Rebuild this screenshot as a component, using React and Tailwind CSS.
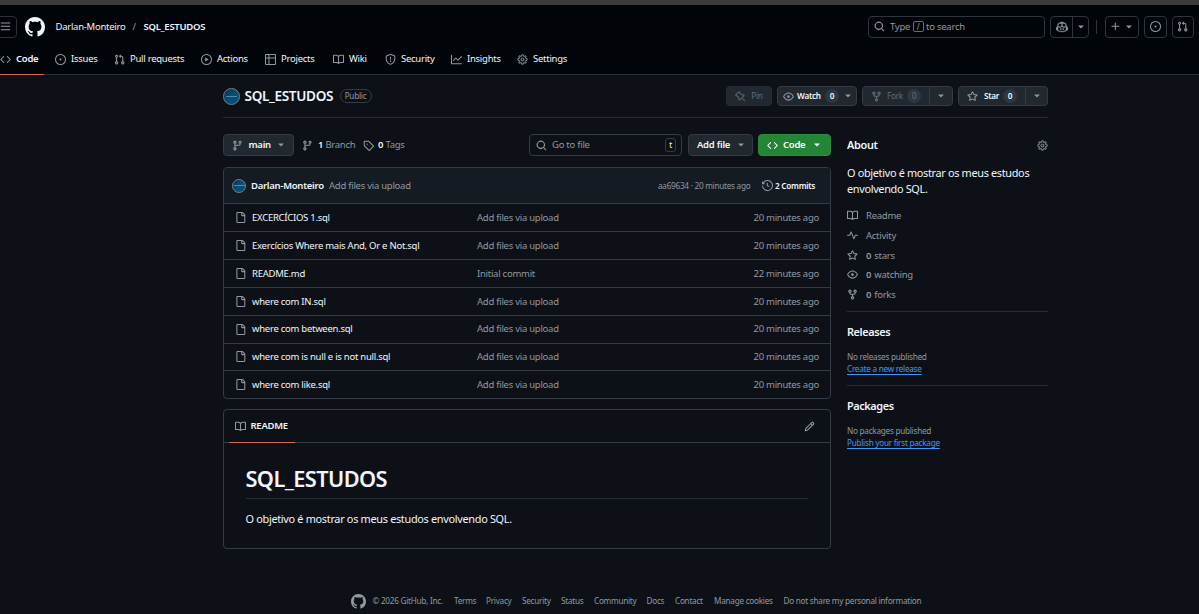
import { GoCopilot, GoGear, GoPin, GoTriangleDown } from "react-icons/go";

const paths = {
  menu: "M1 2.75A.75.75 0 0 1 1.75 2h12.5a.75.75 0 0 1 0 1.5H1.75A.75.75 0 0 1 1 2.75Zm0 5A.75.75 0 0 1 1.75 7h12.5a.75.75 0 0 1 0 1.5H1.75A.75.75 0 0 1 1 7.75ZM1.75 12h12.5a.75.75 0 0 1 0 1.5H1.75a.75.75 0 0 1 0-1.5Z",
  github: "M8 0c4.42 0 8 3.58 8 8a8.013 8.013 0 0 1-5.45 7.59c-.4.08-.55-.17-.55-.38 0-.27.01-1.13.01-2.2 0-.75-.25-1.23-.54-1.48 1.78-.2 3.65-.88 3.65-3.95 0-.88-.31-1.59-.82-2.15.08-.2.36-1.02-.08-2.12 0 0-.67-.22-2.2.82-.64-.18-1.32-.27-2-.27-.68 0-1.36.09-2 .27-1.53-1.03-2.2-.82-2.2-.82-.44 1.1-.16 1.92-.08 2.12-.51.56-.82 1.28-.82 2.15 0 3.06 1.86 3.75 3.64 3.95-.23.2-.44.55-.51 1.07-.46.21-1.61.55-2.33-.66-.15-.24-.6-.83-1.23-.82-.67.01-.27.38.01.53.34.19.73.9.82 1.13.16.45.68 1.31 2.69.94 0 .67.01 1.3.01 1.49 0 .21-.15.45-.55.38A7.995 7.995 0 0 1 0 8c0-4.42 3.58-8 8-8Z",
  code: "m11.28 3.22 4.25 4.25a.75.75 0 0 1 0 1.06l-4.25 4.25a.749.749 0 0 1-1.275-.326.749.749 0 0 1 .215-.734L13.94 8l-3.72-3.72a.749.749 0 0 1 .326-1.275.749.749 0 0 1 .734.215Zm-6.56 0a.751.751 0 0 1 1.042.018.751.751 0 0 1 .018 1.042L2.06 8l3.72 3.72a.749.749 0 0 1-.326 1.275.749.749 0 0 1-.734-.215L.47 8.53a.75.75 0 0 1 0-1.06Z",
  issue: "M8 9.5a1.5 1.5 0 1 0 0-3 1.5 1.5 0 0 0 0 3ZM8 0a8 8 0 1 1 0 16A8 8 0 0 1 8 0ZM1.5 8a6.5 6.5 0 1 0 13 0 6.5 6.5 0 0 0-13 0Z",
  pullRequest: "M1.5 3.25a2.25 2.25 0 1 1 3 2.122v5.256a2.251 2.251 0 1 1-1.5 0V5.372A2.25 2.25 0 0 1 1.5 3.25Zm5.677-.177L9.573.677A.25.25 0 0 1 10 .854V2.5h1A2.5 2.5 0 0 1 13.5 5v5.628a2.251 2.251 0 1 1-1.5 0V5a1 1 0 0 0-1-1h-1v1.646a.25.25 0 0 1-.427.177L7.177 3.427a.25.25 0 0 1 0-.354ZM3.75 2.5a.75.75 0 1 0 0 1.5.75.75 0 0 0 0-1.5Zm0 9.5a.75.75 0 1 0 0 1.5.75.75 0 0 0 0-1.5Zm8.25.75a.75.75 0 1 0 1.5 0 .75.75 0 0 0-1.5 0Z",
  play: "M8 0a8 8 0 1 1 0 16A8 8 0 0 1 8 0ZM1.5 8a6.5 6.5 0 1 0 13 0 6.5 6.5 0 0 0-13 0Zm4.879-2.773 4.264 2.559a.25.25 0 0 1 0 .428l-4.264 2.559A.25.25 0 0 1 6 10.559V5.442a.25.25 0 0 1 .379-.215Z",
  table: "M0 1.75C0 .784.784 0 1.75 0h12.5C15.216 0 16 .784 16 1.75v12.5A1.75 1.75 0 0 1 14.25 16H1.75A1.75 1.75 0 0 1 0 14.25ZM6.5 6.5v8h7.75a.25.25 0 0 0 .25-.25V6.5Zm8-1.5V1.75a.25.25 0 0 0-.25-.25H6.5V5Zm-13 1.5v7.75c0 .138.112.25.25.25H5v-8ZM5 5V1.5H1.75a.25.25 0 0 0-.25.25V5Z",
  book: "M0 1.75A.75.75 0 0 1 .75 1h4.253c1.227 0 2.317.59 3 1.501A3.743 3.743 0 0 1 11.006 1h4.245a.75.75 0 0 1 .75.75v10.5a.75.75 0 0 1-.75.75h-4.507a2.25 2.25 0 0 0-1.591.659l-.622.621a.75.75 0 0 1-1.06 0l-.622-.621A2.25 2.25 0 0 0 5.258 13H.75a.75.75 0 0 1-.75-.75Zm7.251 10.324.004-5.073-.002-2.253A2.25 2.25 0 0 0 5.003 2.5H1.5v9h3.757a3.75 3.75 0 0 1 1.994.574ZM8.755 4.75l-.004 7.322a3.752 3.752 0 0 1 1.992-.572H14.5v-9h-3.495a2.25 2.25 0 0 0-2.25 2.25Z",
  shield: "M7.467.133a1.748 1.748 0 0 1 1.066 0l5.25 1.68A1.75 1.75 0 0 1 15 3.48V7c0 1.566-.32 3.182-1.303 4.682-.983 1.498-2.585 2.813-5.032 3.855a1.697 1.697 0 0 1-1.33 0c-2.447-1.042-4.049-2.357-5.032-3.855C1.32 10.182 1 8.566 1 7V3.48a1.75 1.75 0 0 1 1.217-1.667Zm.61 1.429a.25.25 0 0 0-.153 0l-5.25 1.68a.25.25 0 0 0-.174.238V7c0 1.358.275 2.666 1.057 3.86.784 1.194 2.121 2.34 4.366 3.297a.196.196 0 0 0 .154 0c2.245-.956 3.582-2.104 4.366-3.298C13.225 9.666 13.5 8.36 13.5 7V3.48a.251.251 0 0 0-.174-.237l-5.25-1.68ZM8.75 4.75v3a.75.75 0 0 1-1.5 0v-3a.75.75 0 0 1 1.5 0ZM9 10.5a1 1 0 1 1-2 0 1 1 0 0 1 2 0Z",
  graph: "M1.5 1.75V13.5h13.75a.75.75 0 0 1 0 1.5H.75a.75.75 0 0 1-.75-.75V1.75a.75.75 0 0 1 1.5 0Zm14.28 2.53-5.25 5.25a.75.75 0 0 1-1.06 0L7 7.06 4.28 9.78a.751.751 0 0 1-1.042-.018.751.751 0 0 1-.018-1.042l3.25-3.25a.75.75 0 0 1 1.06 0L10 7.94l4.72-4.72a.751.751 0 0 1 1.042.018.751.751 0 0 1 .018 1.042Z",
  eye: "M8 2c1.981 0 3.671.992 4.933 2.078 1.27 1.091 2.187 2.345 2.637 3.023a1.62 1.62 0 0 1 0 1.798c-.45.678-1.367 1.932-2.637 3.023C11.67 13.008 9.981 14 8 14c-1.981 0-3.671-.992-4.933-2.078C1.797 10.83.88 9.576.43 8.898a1.62 1.62 0 0 1 0-1.798c.45-.677 1.367-1.931 2.637-3.022C4.33 2.992 6.019 2 8 2ZM1.679 7.932a.12.12 0 0 0 0 .136c.411.622 1.241 1.75 2.366 2.717C5.176 11.758 6.527 12.5 8 12.5c1.473 0 2.825-.742 3.955-1.715 1.124-.967 1.954-2.096 2.366-2.717a.12.12 0 0 0 0-.136c-.412-.621-1.242-1.75-2.366-2.717C10.824 4.242 9.473 3.5 8 3.5c-1.473 0-2.825.742-3.955 1.715-1.124.967-1.954 2.096-2.366 2.717ZM8 10a2 2 0 1 1-.001-3.999A2 2 0 0 1 8 10Z",
  fork: "M5 5.372v.878c0 .414.336.75.75.75h4.5a.75.75 0 0 0 .75-.75v-.878a2.25 2.25 0 1 1 1.5 0v.878a2.25 2.25 0 0 1-2.25 2.25h-1.5v2.128a2.251 2.251 0 1 1-1.5 0V8.5h-1.5A2.25 2.25 0 0 1 3.5 6.25v-.878a2.25 2.25 0 1 1 1.5 0ZM5 3.25a.75.75 0 1 0-1.5 0 .75.75 0 0 0 1.5 0Zm6.75.75a.75.75 0 1 0 0-1.5.75.75 0 0 0 0 1.5Zm-3 8.75a.75.75 0 1 0-1.5 0 .75.75 0 0 0 1.5 0Z",
  star: "M8 .25a.75.75 0 0 1 .673.418l1.882 3.815 4.21.612a.75.75 0 0 1 .416 1.279l-3.046 2.97.719 4.192a.751.751 0 0 1-1.088.791L8 12.347l-3.766 1.98a.75.75 0 0 1-1.088-.79l.72-4.194L.818 6.374a.75.75 0 0 1 .416-1.28l4.21-.611L7.327.668A.75.75 0 0 1 8 .25Zm0 2.445L6.615 5.5a.75.75 0 0 1-.564.41l-3.097.45 2.24 2.184a.75.75 0 0 1 .216.664l-.528 3.084 2.769-1.456a.75.75 0 0 1 .698 0l2.77 1.456-.53-3.084a.75.75 0 0 1 .216-.664l2.24-2.183-3.096-.45a.75.75 0 0 1-.564-.41L8 2.694Z",
  branch: "M9.5 3.25a2.25 2.25 0 1 1 3 2.122V6A2.5 2.5 0 0 1 10 8.5H6a1 1 0 0 0-1 1v1.128a2.251 2.251 0 1 1-1.5 0V5.372a2.25 2.25 0 1 1 1.5 0v1.836A2.493 2.493 0 0 1 6 7h4a1 1 0 0 0 1-1v-.628A2.25 2.25 0 0 1 9.5 3.25Zm-6 0a.75.75 0 1 0 1.5 0 .75.75 0 0 0-1.5 0Zm8.25-.75a.75.75 0 1 0 0 1.5.75.75 0 0 0 0-1.5ZM4.25 12a.75.75 0 1 0 0 1.5.75.75 0 0 0 0-1.5Z",
  tag: "M1 7.775V2.75C1 1.784 1.784 1 2.75 1h5.025c.464 0 .91.184 1.238.513l6.25 6.25a1.75 1.75 0 0 1 0 2.474l-5.026 5.026a1.75 1.75 0 0 1-2.474 0l-6.25-6.25A1.752 1.752 0 0 1 1 7.775Zm1.5 0c0 .066.026.13.073.177l6.25 6.25a.25.25 0 0 0 .354 0l5.025-5.025a.25.25 0 0 0 0-.354l-6.25-6.25a.25.25 0 0 0-.177-.073H2.75a.25.25 0 0 0-.25.25ZM6 5a1 1 0 1 1 0 2 1 1 0 0 1 0-2Z",
  search: "M10.68 11.74a6 6 0 0 1-7.922-8.982 6 6 0 0 1 8.982 7.922l3.04 3.04a.749.749 0 0 1-.326 1.275.749.749 0 0 1-.734-.215ZM11.5 7a4.499 4.499 0 1 0-8.997 0A4.499 4.499 0 0 0 11.5 7Z",
  file: "M2 1.75C2 .784 2.784 0 3.75 0h6.586c.464 0 .909.184 1.237.513l2.914 2.914c.329.328.513.773.513 1.237v9.586A1.75 1.75 0 0 1 13.25 16h-9.5A1.75 1.75 0 0 1 2 14.25Zm1.75-.25a.25.25 0 0 0-.25.25v12.5c0 .138.112.25.25.25h9.5a.25.25 0 0 0 .25-.25V6h-2.75A1.75 1.75 0 0 1 9 4.25V1.5Zm6.75.062V4.25c0 .138.112.25.25.25h2.688l-.011-.013-2.914-2.914-.013-.011Z",
  history: "m.427 1.927 1.215 1.215a8.002 8.002 0 1 1-1.6 5.685.75.75 0 1 1 1.493-.154 6.5 6.5 0 1 0 1.18-4.458l1.358 1.358A.25.25 0 0 1 3.896 6H.25A.25.25 0 0 1 0 5.75V2.104a.25.25 0 0 1 .427-.177ZM7.75 4a.75.75 0 0 1 .75.75v2.992l2.028.812a.75.75 0 0 1-.557 1.392l-2.5-1A.751.751 0 0 1 7 8.25v-3.5A.75.75 0 0 1 7.75 4Z",
  pencil: "M11.013 1.427a1.75 1.75 0 0 1 2.474 0l1.086 1.086a1.75 1.75 0 0 1 0 2.474l-8.61 8.61c-.21.21-.47.364-.756.445l-3.251.93a.75.75 0 0 1-.927-.928l.929-3.25c.081-.286.235-.547.445-.758l8.61-8.61Zm.176 4.823L9.75 4.81l-6.286 6.287a.253.253 0 0 0-.064.108l-.558 1.953 1.953-.558a.253.253 0 0 0 .108-.064Zm1.238-3.763a.25.25 0 0 0-.354 0L10.811 3.75l1.439 1.44 1.263-1.263a.25.25 0 0 0 0-.354Z",
  pulse: "M6 2c.306 0 .582.187.696.471L10 10.731l1.304-3.26A.751.751 0 0 1 12 7h3.25a.75.75 0 0 1 0 1.5h-2.742l-1.812 4.528a.751.751 0 0 1-1.392 0L6 4.77 4.696 8.03A.75.75 0 0 1 4 8.5H.75a.75.75 0 0 1 0-1.5h2.742l1.812-4.529A.751.751 0 0 1 6 2Z",
  plus: "M7.75 2a.75.75 0 0 1 .75.75V7h4.25a.75.75 0 0 1 0 1.5H8.5v4.25a.75.75 0 0 1-1.5 0V8.5H2.75a.75.75 0 0 1 0-1.5H7V2.75A.75.75 0 0 1 7.75 2Z",
};

const navItems = [
  { label: "Code", icon: "code", width: "w-[55px]", active: true },
  { label: "Issues", icon: "issue", width: "w-[59px]" },
  { label: "Pull requests", icon: "pullRequest", width: "w-[87px]" },
  { label: "Actions", icon: "play", width: "w-[64px]" },
  { label: "Projects", icon: "table", width: "w-[68px]" },
  { label: "Wiki", icon: "book", width: "w-[52px]" },
  { label: "Security", icon: "shield", width: "w-[66px]" },
  { label: "Insights", icon: "graph", width: "w-[66px]" },
  { label: "Settings", icon: "gear", width: "w-[60px]" },
];

const files = [
  { name: "EXCERCÍCIOS 1.sql", message: "Add files via upload", age: "20 minutes ago" },
  { name: "Exercícios Where mais And, Or e Not.sql", message: "Add files via upload", age: "20 minutes ago" },
  { name: "README.md", message: "Initial commit", age: "22 minutes ago" },
  { name: "where com IN.sql", message: "Add files via upload", age: "20 minutes ago" },
  { name: "where com between.sql", message: "Add files via upload", age: "20 minutes ago" },
  { name: "where com is null e is not null.sql", message: "Add files via upload", age: "20 minutes ago" },
  { name: "where com like.sql", message: "Add files via upload", age: "20 minutes ago" },
];

const stats = [
  { icon: "book", label: "Readme" },
  { icon: "pulse", label: "Activity" },
  { icon: "star", count: "0", label: "stars" },
  { icon: "eye", count: "0", label: "watching" },
  { icon: "fork", count: "0", label: "forks" },
];

const footerLinks = [
  { label: "Terms", width: "w-[32px]" },
  { label: "Privacy", width: "w-[36px]" },
  { label: "Security", width: "w-[39px]" },
  { label: "Status", width: "w-[33px]" },
  { label: "Community", width: "w-[52.5px]" },
  { label: "Docs", width: "w-[28.5px]" },
  { label: "Contact", width: "w-[39px]" },
  { label: "Manage cookies", width: "w-[69.5px]" },
  { label: "Do not share my personal information", width: "w-[138px]" },
];

const Icon = ({ name, className = "size-[11px] text-[#9198a1]" }) => {
  if (name === "gear") {
    return <GoGear className={`shrink-0 stroke-[0.6px] ${className}`} />;
  }
  return (
    <svg viewBox="0 0 16 16" fill="currentColor" className={`shrink-0 ${className}`}>
      <path d={paths[name]} />
    </svg>
  );
};

const Caret = ({ className = "text-[#9198a1]" }) => (
  <GoTriangleDown className={`size-[10px] shrink-0 ${className}`} />
);

const Avatar = ({ className }) => (
  <span
    className={`flex shrink-0 items-center justify-center overflow-hidden rounded-full border border-[#72838f] bg-linear-to-br from-[#082c46] via-[#07507a] to-[#064a70] ${className}`}
  >
    <span className="h-px w-[11px] bg-[#4f89a8]" />
  </span>
);

const Count = ({ children }) => (
  <span className="flex h-[14px] w-[14px] items-center justify-center rounded-full bg-[#2f3742]">
    {children}
  </span>
);

const Header = () => (
  <header className="h-[70px] border-b border-[#2a3038] bg-[#010409]">
    <div className="flex h-[43px] items-center">
      <div className="-ml-[6px] flex h-[22px] w-[22.5px] shrink-0 items-center justify-center rounded-[4px] border border-[#2b3139]">
        <Icon name="menu" />
      </div>
      <Icon name="github" className="ml-[8.5px] size-[20px] text-[#f0f6fc]" />
      <span className="ml-[10.5px] w-[77px] pt-px text-[9.5px]">Darlan-Monteiro</span>
      <span className="w-[11px] pt-px text-[9.5px] text-[#9198a1]">/</span>
      <span className="pt-px text-[9.5px] font-semibold">SQL_ESTUDOS</span>

      <div className="ml-auto flex w-[331px] shrink-0 items-center text-[#9198a1]">
        <div className="flex h-[22px] w-[177px] items-center rounded-[4px] border border-[#2f353d] pl-[5px] text-[9.5px]">
          <Icon name="search" />
          <span className="ml-[5px] pt-px">Type</span>
          <span className="mx-[2.5px] flex h-[11px] w-[11px] items-center justify-center rounded-[2px] border border-[#656c76] text-[8px]">
            /
          </span>
          <span className="pt-px">to search</span>
        </div>
        <div className="ml-[5px] flex h-[22px] w-[39px] items-center rounded-[4px] border border-[#2f353d]">
          <span className="flex h-full w-[22px] items-center justify-center border-r border-[#2f353d]">
            <GoCopilot className="size-[12px] stroke-[0.7px]" />
          </span>
          <span className="flex flex-1 justify-center">
            <Caret />
          </span>
        </div>
        <span className="ml-[7px] h-[14px] w-px bg-[#2f353d]" />
        <div className="ml-[8px] flex h-[22px] w-[34px] items-center justify-center gap-[3px] rounded-[4px] border border-[#2f353d]">
          <Icon name="plus" />
          <Caret />
        </div>
        <div className="ml-[5px] flex h-[22px] w-[22.5px] items-center justify-center rounded-[4px] border border-[#2f353d]">
          <Icon name="issue" />
        </div>
        <div className="ml-[5px] flex h-[22px] w-[22px] items-center justify-center rounded-[4px] border border-[#2f353d]">
          <Icon name="pullRequest" />
        </div>
      </div>
    </div>

    <nav className="flex h-[27px] text-[9.5px]">
      {navItems.map(({ label, icon, width, active }) => (
        <div key={label} className={`flex h-[27px] shrink-0 ${width}`}>
          <div
            className={`flex items-center ${active ? "w-[44px] border-b-[1.5px] border-[#d9654c] pb-[3.5px] font-semibold" : "pb-[4.5px]"}`}
          >
            <span className="w-[16px] shrink-0">
              <Icon name={icon} />
            </span>
            <span className="whitespace-nowrap">{label}</span>
          </div>
        </div>
      ))}
    </nav>
  </header>
);

const RepoTitle = () => (
  <div className="flex h-[43px] items-center border-b border-[#272d35]">
    <Avatar className="size-[17px]" />
    <h1 className="ml-[5px] w-[95px] pt-px text-[13.6px] font-semibold tracking-[-0.34px]">SQL_ESTUDOS</h1>
    <span className="flex h-[14px] w-[32px] items-center justify-center rounded-full border border-[#343b44] pt-px text-[8.2px] text-[#9198a1]">
      Public
    </span>

    <div className="ml-auto flex gap-[5px] text-[8.2px] font-semibold">
      <div className="flex h-[20px] w-[46px] items-center justify-center gap-[5px] rounded-[4px] border border-[#262c36] bg-[#212830] font-normal text-[#656c76]">
        <GoPin className="size-[11px] stroke-[0.7px]" />
        Pin
      </div>
      <div className="flex h-[20px] w-[80px] items-center rounded-[4px] border border-[#343b44] bg-[#212830] pl-[5px]">
        <Icon name="eye" />
        <span className="ml-[3px] w-[28px]">Watch</span>
        <Count>0</Count>
        <Caret className="ml-[4px] text-[#9198a1]" />
      </div>
      <div className="flex h-[20px] w-[91px] items-center rounded-[4px] border border-[#343b44] bg-[#212830]">
        <div className="flex h-full w-[67px] items-center border-r border-[#343b44] pl-[8px] font-normal text-[#656c76]">
          <Icon name="fork" className="size-[11px]" />
          <span className="ml-[5px] w-[20px]">Fork</span>
          <Count>0</Count>
        </div>
        <Caret className="mx-auto text-[#9198a1]" />
      </div>
      <div className="flex h-[20px] w-[90px] items-center rounded-[4px] border border-[#343b44] bg-[#212830]">
        <div className="flex h-full w-[67px] items-center border-r border-[#343b44] pl-[8px]">
          <Icon name="star" />
          <span className="ml-[6px] w-[19px]">Star</span>
          <Count>0</Count>
        </div>
        <Caret className="mx-auto text-[#9198a1]" />
      </div>
    </div>
  </div>
);

const Toolbar = () => (
  <div className="flex h-[22px] items-center text-[9.5px]">
    <div className="flex h-full w-[71.5px] items-center rounded-[4px] border border-[#343b44] bg-[#212830] pl-[8px] font-semibold">
      <Icon name="branch" />
      <span className="ml-[6px] w-[27px] pt-px">main</span>
      <Caret />
    </div>
    <span className="ml-[8px] flex">
      <Icon name="branch" />
    </span>
    <span className="ml-[5px] w-[44.5px] pt-px whitespace-nowrap text-[#9198a1]">
      <b className="font-semibold text-[#f0f6fc]">1</b> Branch
    </span>
    <Icon name="tag" />
    <span className="ml-[4.5px] pt-px whitespace-nowrap text-[#9198a1]">
      <b className="font-semibold text-[#f0f6fc]">0</b> Tags
    </span>

    <div className="ml-auto flex h-full w-[153px] items-center rounded-[4px] border border-[#343b44] pl-[6px] pr-[5px] text-[#9198a1]">
      <Icon name="search" />
      <span className="ml-[5px] pt-px">Go to file</span>
      <span className="ml-auto flex h-[14px] w-[11px] items-center justify-center rounded-[3px] border border-[#343b44] text-[8.2px] text-[#f0f6fc]">
        t
      </span>
    </div>
    <div className="ml-[6px] flex h-full w-[65px] items-center rounded-[4px] border border-[#343b44] bg-[#212830] pl-[8px] font-semibold">
      <span className="w-[39px] pt-px">Add file</span>
      <Caret />
    </div>
    <div className="ml-[5px] flex h-full w-[73px] items-center rounded-[4px] border border-[#2c8c3e] bg-[#238636] pl-[8px] font-semibold text-white">
      <Icon name="code" className="size-[11px]" />
      <span className="ml-[5px] w-[29px] pt-px">Code</span>
      <Caret className="text-white" />
    </div>
  </div>
);

const FileTable = () => (
  <div className="mt-[11px] h-[232px] overflow-hidden rounded-[4px] border border-[#343b44] text-[9.5px]">
    <div className="flex h-[35.3px] items-center bg-[#151b23] pl-[8.5px] pr-[14px]">
      <Avatar className="size-[14px]" />
      <span className="ml-[5px] w-[78px] pt-px font-semibold">Darlan-Monteiro</span>
      <span className="pt-px text-[#9198a1]">Add files via upload</span>
      <span className="ml-auto w-[104px] whitespace-nowrap text-[8.2px] text-[#9198a1]">aa69634 · 20 minutes ago</span>
      <Icon name="history" />
      <span className="ml-[2px] w-[41px] whitespace-nowrap text-[8.2px] font-semibold">2 Commits</span>
    </div>
    {files.map((file) => (
      <div key={file.name} className="flex h-[27.85px] items-center border-t border-[#343b44] pl-[11px] pr-[11px]">
        <Icon name="file" />
        <span className="ml-[6.5px] w-[225px] pt-px">{file.name}</span>
        <span className="pt-px text-[#9198a1]">{file.message}</span>
        <span className="ml-auto pt-px text-[#9198a1]">{file.age}</span>
      </div>
    ))}
  </div>
);

const Readme = () => (
  <article className="mt-[10px] h-[140px] rounded-[4px] border border-[#343b44]">
    <div className="flex h-[33px] items-stretch border-b border-[#343b44] pl-[5px] pr-[15px]">
      <div className="-mb-px flex w-[66px] items-center border-b-[1.5px] border-[#d9654c] pl-[6px] text-[9.5px] font-semibold">
        <Icon name="book" />
        <span className="ml-[5px] pt-px">README</span>
      </div>
      <span className="ml-auto flex items-center">
        <Icon name="pencil" />
      </span>
    </div>
    <div className="px-[22px] pt-[19px]">
      <h2 className="h-[37px] border-b border-[#272d35] text-[21.8px] leading-[34px] font-semibold tracking-[-0.62px]">
        SQL_ESTUDOS
      </h2>
      <p className="mt-[11px] text-[10.9px] leading-[17px] tracking-[-0.31px]">
        O objetivo é mostrar os meus estudos envolvendo SQL.
      </p>
    </div>
  </article>
);

const Sidebar = () => (
  <aside className="w-[201px] shrink-0">
    <div className="flex h-[22px] items-center justify-between">
      <h3 className="pt-px text-[10.9px] font-semibold tracking-[-0.32px]">About</h3>
      <Icon name="gear" />
    </div>
    <p className="mt-[9px] text-[10.9px] leading-[16.3px] tracking-[-0.33px]">
      O objetivo é mostrar os meus estudos
      <br />
      envolvendo SQL.
    </p>
    <ul className="mt-[8.5px] text-[9.5px] text-[#9198a1]">
      {stats.map(({ icon, count, label }) => (
        <li key={label} className="flex h-[19.65px] items-center">
          <Icon name={icon} />
          <span className="ml-[8px] flex gap-[3px] pt-px">
            {count && <b className="font-semibold">{count}</b>}
            {label}
          </span>
        </li>
      ))}
    </ul>
    <div className="mt-[7px] h-[74px] border-t border-[#272d35] pt-[12px]">
      <h3 className="text-[10.9px] leading-[16px] font-semibold tracking-[-0.4px]">Releases</h3>
      <p className="mt-[11px] text-[8.2px] leading-[12px] text-[#9198a1]">No releases published</p>
      <a className="block text-[8.2px] leading-[12.5px] text-[#4493f8] underline underline-offset-2">Create a new release</a>
    </div>
    <div className="border-t border-[#272d35] pt-[12px]">
      <h3 className="text-[10.9px] leading-[16px] font-semibold tracking-[-0.4px]">Packages</h3>
      <p className="mt-[11px] text-[8.2px] leading-[12px] text-[#9198a1]">No packages published</p>
      <a className="block text-[8.2px] leading-[12.5px] text-[#4493f8] underline underline-offset-2">Publish your first package</a>
    </div>
  </aside>
);

const Footer = () => (
  <footer className="mt-auto flex h-[26px] items-center pl-[351px] text-[8.2px] whitespace-nowrap text-[#9198a1]">
    <Icon name="github" className="size-[15px]" />
    <span className="ml-[6.5px] w-[81.5px]">© 2026 GitHub, Inc.</span>
    {footerLinks.map((link) => (
      <span key={link.label} className={link.width}>
        {link.label}
      </span>
    ))}
  </footer>
);

export default function App() {
  return (
    <div className="flex h-[614px] w-[1199px] flex-col overflow-hidden bg-[#0d1117] font-['Noto_Sans','Open_Sans',sans-serif] tracking-[-0.26px] text-[#f0f6fc]">
      <div className="h-[5px] shrink-0 bg-[#3c3c3c]" />
      <Header />
      <main className="ml-[222.5px] w-[825.5px]">
        <RepoTitle />
        <div className="mt-[16px] flex justify-between">
          <div className="w-[608.5px]">
            <Toolbar />
            <FileTable />
            <Readme />
          </div>
          <Sidebar />
        </div>
      </main>
      <Footer />
    </div>
  );
}
